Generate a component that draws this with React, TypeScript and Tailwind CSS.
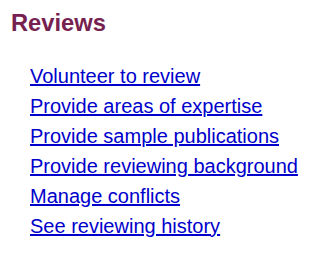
import React from "react";

const links = [
  "Volunteer to review",
  "Provide areas of expertise",
  "Provide sample publications",
  "Provide reviewing background",
  "Manage conflicts",
  "See reviewing history",
];

export default function App() {
  return (
    <div className="w-[320px] h-[263px] bg-white pt-[10px] pl-[11px]" style={{ fontFamily: '"Liberation Sans", Arial, sans-serif' }}>
      <h2 className="text-[23.7px] leading-[27px] font-bold text-[#76214f]">Reviews</h2>
      <ul className="mt-[24px] pl-[19px] flex flex-col">
        {links.map((l) => (
          <li key={l} className="text-[20px] leading-[30px]">
            <a href="#" className="text-[#0000cc] underline">{l}</a>
          </li>
        ))}
      </ul>
    </div>
  );
}
